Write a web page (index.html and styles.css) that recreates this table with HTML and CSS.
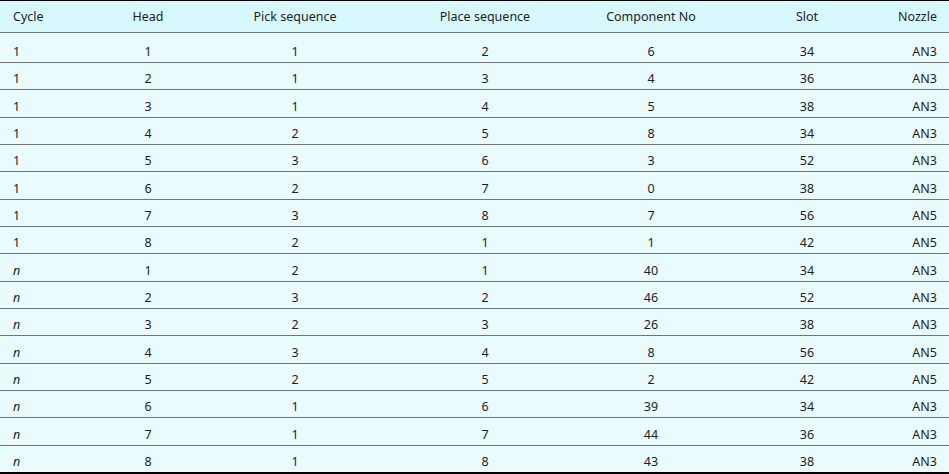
FILE: index.html
```html
<!DOCTYPE html>
<html>
<head>
<meta charset="utf-8">
<link rel="stylesheet" href="styles.css">
</head>
<body>
<table class="tbl">
<colgroup>
<col class="c1"><col class="c2"><col class="c3"><col class="c4"><col class="c5"><col class="c6"><col class="c7">
</colgroup>
<thead>
<tr><th class="l">Cycle</th><th>Head</th><th>Pick sequence</th><th>Place sequence</th><th>Component No</th><th>Slot</th><th class="r">Nozzle</th></tr>
</thead>
<tbody>
<tr class="first"><td class="l">1</td><td>1</td><td>1</td><td>2</td><td>6</td><td>34</td><td class="r">AN3</td></tr>
<tr><td class="l">1</td><td>2</td><td>1</td><td>3</td><td>4</td><td>36</td><td class="r">AN3</td></tr>
<tr><td class="l">1</td><td>3</td><td>1</td><td>4</td><td>5</td><td>38</td><td class="r">AN3</td></tr>
<tr><td class="l">1</td><td>4</td><td>2</td><td>5</td><td>8</td><td>34</td><td class="r">AN3</td></tr>
<tr><td class="l">1</td><td>5</td><td>3</td><td>6</td><td>3</td><td>52</td><td class="r">AN3</td></tr>
<tr><td class="l">1</td><td>6</td><td>2</td><td>7</td><td>0</td><td>38</td><td class="r">AN3</td></tr>
<tr><td class="l">1</td><td>7</td><td>3</td><td>8</td><td>7</td><td>56</td><td class="r">AN5</td></tr>
<tr><td class="l">1</td><td>8</td><td>2</td><td>1</td><td>1</td><td>42</td><td class="r">AN5</td></tr>
<tr><td class="l"><i>n</i></td><td>1</td><td>2</td><td>1</td><td>40</td><td>34</td><td class="r">AN3</td></tr>
<tr><td class="l"><i>n</i></td><td>2</td><td>3</td><td>2</td><td>46</td><td>52</td><td class="r">AN3</td></tr>
<tr><td class="l"><i>n</i></td><td>3</td><td>2</td><td>3</td><td>26</td><td>38</td><td class="r">AN3</td></tr>
<tr><td class="l"><i>n</i></td><td>4</td><td>3</td><td>4</td><td>8</td><td>56</td><td class="r">AN5</td></tr>
<tr><td class="l"><i>n</i></td><td>5</td><td>2</td><td>5</td><td>2</td><td>42</td><td class="r">AN5</td></tr>
<tr><td class="l"><i>n</i></td><td>6</td><td>1</td><td>6</td><td>39</td><td>34</td><td class="r">AN3</td></tr>
<tr><td class="l"><i>n</i></td><td>7</td><td>1</td><td>7</td><td>44</td><td>36</td><td class="r">AN3</td></tr>
<tr><td class="l"><i>n</i></td><td>8</td><td>1</td><td>8</td><td>43</td><td>38</td><td class="r">AN3</td></tr>
</tbody>
</table>
</body>
</html>
```
FILE: styles.css
```css
html, body {
  margin: 0;
  padding: 0;
  background: #ffffff;
}
.tbl {
  width: 949px;
  border-collapse: collapse;
  table-layout: fixed;
  font-family: "Noto Sans", "Open Sans", sans-serif;
  font-size: 12.5px;
  line-height: 16px;
  color: #1e1e1e;
  background: #e9fbfc;
  border-top: 1px solid #000;
  border-bottom: 2px solid #000;
}
.c1 { width: 90px; }
.c2 { width: 116px; }
.c3 { width: 178px; }
.c4 { width: 202px; }
.c5 { width: 130px; }
.c6 { width: 182px; }
.c7 { width: 51px; }
.tbl th {
  font-weight: normal;
  background: #d7f8fc;
  height: 31px;
  padding: 0;
  text-align: center;
  vertical-align: middle;
  border-bottom: 1px solid #6f7475;
}
.tbl td {
  height: 24.33px;
  padding: 0 0 2px 0;
  text-align: center;
  vertical-align: bottom;
  border-bottom: 1px solid #6f7475;
}
.tbl .first td { height: 27px; }
.tbl tbody tr:last-child td {
  border-bottom: none;
}
.tbl .l { text-align: left; padding-left: 13px; }
.tbl .r { text-align: right; padding-right: 12px; }
```
